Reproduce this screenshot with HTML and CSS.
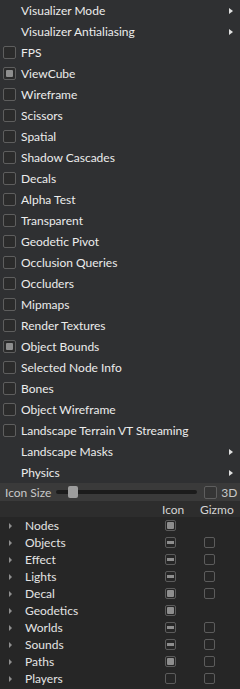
FILE: index.html
```html
<!DOCTYPE html>
<html>
<head>
<meta charset="utf-8">
<link rel="stylesheet" href="styles.css">
</head>
<body>
<div class="menu">
  <div class="item"><span class="chk hidden"></span><span class="label">Visualizer Mode</span><span class="arrow"></span></div>
  <div class="item"><span class="chk hidden"></span><span class="label">Visualizer Antialiasing</span><span class="arrow"></span></div>
  <div class="item"><span class="chk"></span><span class="label">FPS</span></div>
  <div class="item"><span class="chk on"></span><span class="label">ViewCube</span></div>
  <div class="item"><span class="chk"></span><span class="label">Wireframe</span></div>
  <div class="item"><span class="chk"></span><span class="label">Scissors</span></div>
  <div class="item"><span class="chk"></span><span class="label">Spatial</span></div>
  <div class="item"><span class="chk"></span><span class="label">Shadow Cascades</span></div>
  <div class="item"><span class="chk"></span><span class="label">Decals</span></div>
  <div class="item"><span class="chk"></span><span class="label">Alpha Test</span></div>
  <div class="item"><span class="chk"></span><span class="label">Transparent</span></div>
  <div class="item"><span class="chk"></span><span class="label">Geodetic Pivot</span></div>
  <div class="item"><span class="chk"></span><span class="label">Occlusion Queries</span></div>
  <div class="item"><span class="chk"></span><span class="label">Occluders</span></div>
  <div class="item"><span class="chk"></span><span class="label">Mipmaps</span></div>
  <div class="item"><span class="chk"></span><span class="label">Render Textures</span></div>
  <div class="item"><span class="chk on"></span><span class="label">Object Bounds</span></div>
  <div class="item"><span class="chk"></span><span class="label">Selected Node Info</span></div>
  <div class="item"><span class="chk"></span><span class="label">Bones</span></div>
  <div class="item"><span class="chk"></span><span class="label">Object Wireframe</span></div>
  <div class="item"><span class="chk"></span><span class="label">Landscape Terrain VT Streaming</span></div>
  <div class="item"><span class="chk hidden"></span><span class="label">Landscape Masks</span><span class="arrow"></span></div>
  <div class="item"><span class="chk hidden"></span><span class="label">Physics</span><span class="arrow"></span></div>
</div>
<div class="toolbar">
  <span class="tb-label">Icon Size</span>
  <div class="slider"><div class="handle"></div></div>
  <span class="chk small3d"></span>
  <span class="tb-label">3D</span>
</div>
<div class="tree">
  <div class="tree-head"><span></span><span class="h-icon">Icon</span><span class="h-gizmo">Gizmo</span></div>
  <div class="row"><span class="tri"></span><span class="name">Nodes</span><span class="cell"><span class="tc on"></span></span><span class="cell"></span></div>
  <div class="row"><span class="tri"></span><span class="name">Objects</span><span class="cell"><span class="tc part"></span></span><span class="cell"><span class="tc"></span></span></div>
  <div class="row"><span class="tri"></span><span class="name">Effect</span><span class="cell"><span class="tc part"></span></span><span class="cell"><span class="tc"></span></span></div>
  <div class="row"><span class="tri"></span><span class="name">Lights</span><span class="cell"><span class="tc part"></span></span><span class="cell"><span class="tc"></span></span></div>
  <div class="row"><span class="tri"></span><span class="name">Decal</span><span class="cell"><span class="tc on"></span></span><span class="cell"><span class="tc"></span></span></div>
  <div class="row"><span class="tri"></span><span class="name">Geodetics</span><span class="cell"><span class="tc on"></span></span><span class="cell"></span></div>
  <div class="row"><span class="tri"></span><span class="name">Worlds</span><span class="cell"><span class="tc part"></span></span><span class="cell"><span class="tc"></span></span></div>
  <div class="row"><span class="tri"></span><span class="name">Sounds</span><span class="cell"><span class="tc part"></span></span><span class="cell"><span class="tc"></span></span></div>
  <div class="row"><span class="tri"></span><span class="name">Paths</span><span class="cell"><span class="tc on"></span></span><span class="cell"><span class="tc"></span></span></div>
  <div class="row"><span class="tri"></span><span class="name">Players</span><span class="cell"><span class="tc"></span></span><span class="cell"><span class="tc"></span></span></div>
</div>
</body>
</html>
```
FILE: styles.css
```css
html, body {
  margin: 0;
  padding: 0;
  background: #272727;
}
body {
  width: 240px;
  height: 689px;
  overflow: hidden;
  font-family: Lato, "Liberation Sans", sans-serif;
  font-size: 12px;
  color: #ececec;
}
.menu {
  background: #2f3032;
}
.item {
  height: 21px;
  display: flex;
  align-items: center;
  padding-left: 3px;
}
.chk {
  box-sizing: border-box;
  width: 13px;
  height: 13px;
  border: 1px solid #5e5e5e;
  border-radius: 2px;
  background: #2b2b2b;
  flex: none;
  position: relative;
}
.chk.hidden {
  visibility: hidden;
}
.chk.on::after {
  content: "";
  position: absolute;
  left: 2px;
  top: 2px;
  width: 7px;
  height: 7px;
  background: #8e8e8e;
  border-radius: 1px;
}
.label {
  margin-left: 5px;
  flex: 1;
  white-space: nowrap;
}
.arrow {
  width: 0;
  height: 0;
  border-left: 4px solid #e0e0e0;
  border-top: 3.5px solid transparent;
  border-bottom: 3.5px solid transparent;
  margin-right: 7px;
}
.toolbar {
  height: 18px;
  background: #3a3a3a;
  display: flex;
  align-items: center;
  padding-left: 5px;
}
.tb-label {
  color: #c8c8c8;
  white-space: nowrap;
  flex: none;
}
.slider {
  flex: none;
  width: 141px;
  height: 4px;
  background: #1b1b1b;
  border-radius: 2px;
  margin-left: 5px;
  position: relative;
}
.handle {
  position: absolute;
  left: 12px;
  top: -4px;
  width: 10px;
  height: 12px;
  border-radius: 2px;
  background: #9c9c9c;
}
.small3d {
  margin-left: 7px;
  margin-right: 4px;
  background: #353535;
}
.tree {
  background: #262626;
}
.tree-head {
  height: 16px;
  background: #2d2d2d;
  display: grid;
  grid-template-columns: 162px 38px 1fr;
  align-items: center;
  color: #d4d4d4;
}
.row {
  height: 17px;
  display: grid;
  grid-template-columns: 25px 140px 39px 1fr;
  align-items: center;
  color: #e4e4e4;
}
.tri {
  width: 0;
  height: 0;
  margin-left: 9px;
  border-left: 3.5px solid #8f8f8f;
  border-top: 3.5px solid transparent;
  border-bottom: 3.5px solid transparent;
}
.cell {
  display: flex;
  align-items: center;
}
.tc {
  box-sizing: border-box;
  width: 11px;
  height: 11px;
  border: 1px solid #5c5c5c;
  border-radius: 2px;
  position: relative;
}
.tc.on::after {
  content: "";
  position: absolute;
  left: 1px;
  top: 1px;
  width: 7px;
  height: 7px;
  background: #8e8e8e;
  border-radius: 1px;
}
.tc.part::after {
  content: "";
  position: absolute;
  left: 1px;
  top: 3px;
  width: 7px;
  height: 3px;
  background: #8e8e8e;
}
```
